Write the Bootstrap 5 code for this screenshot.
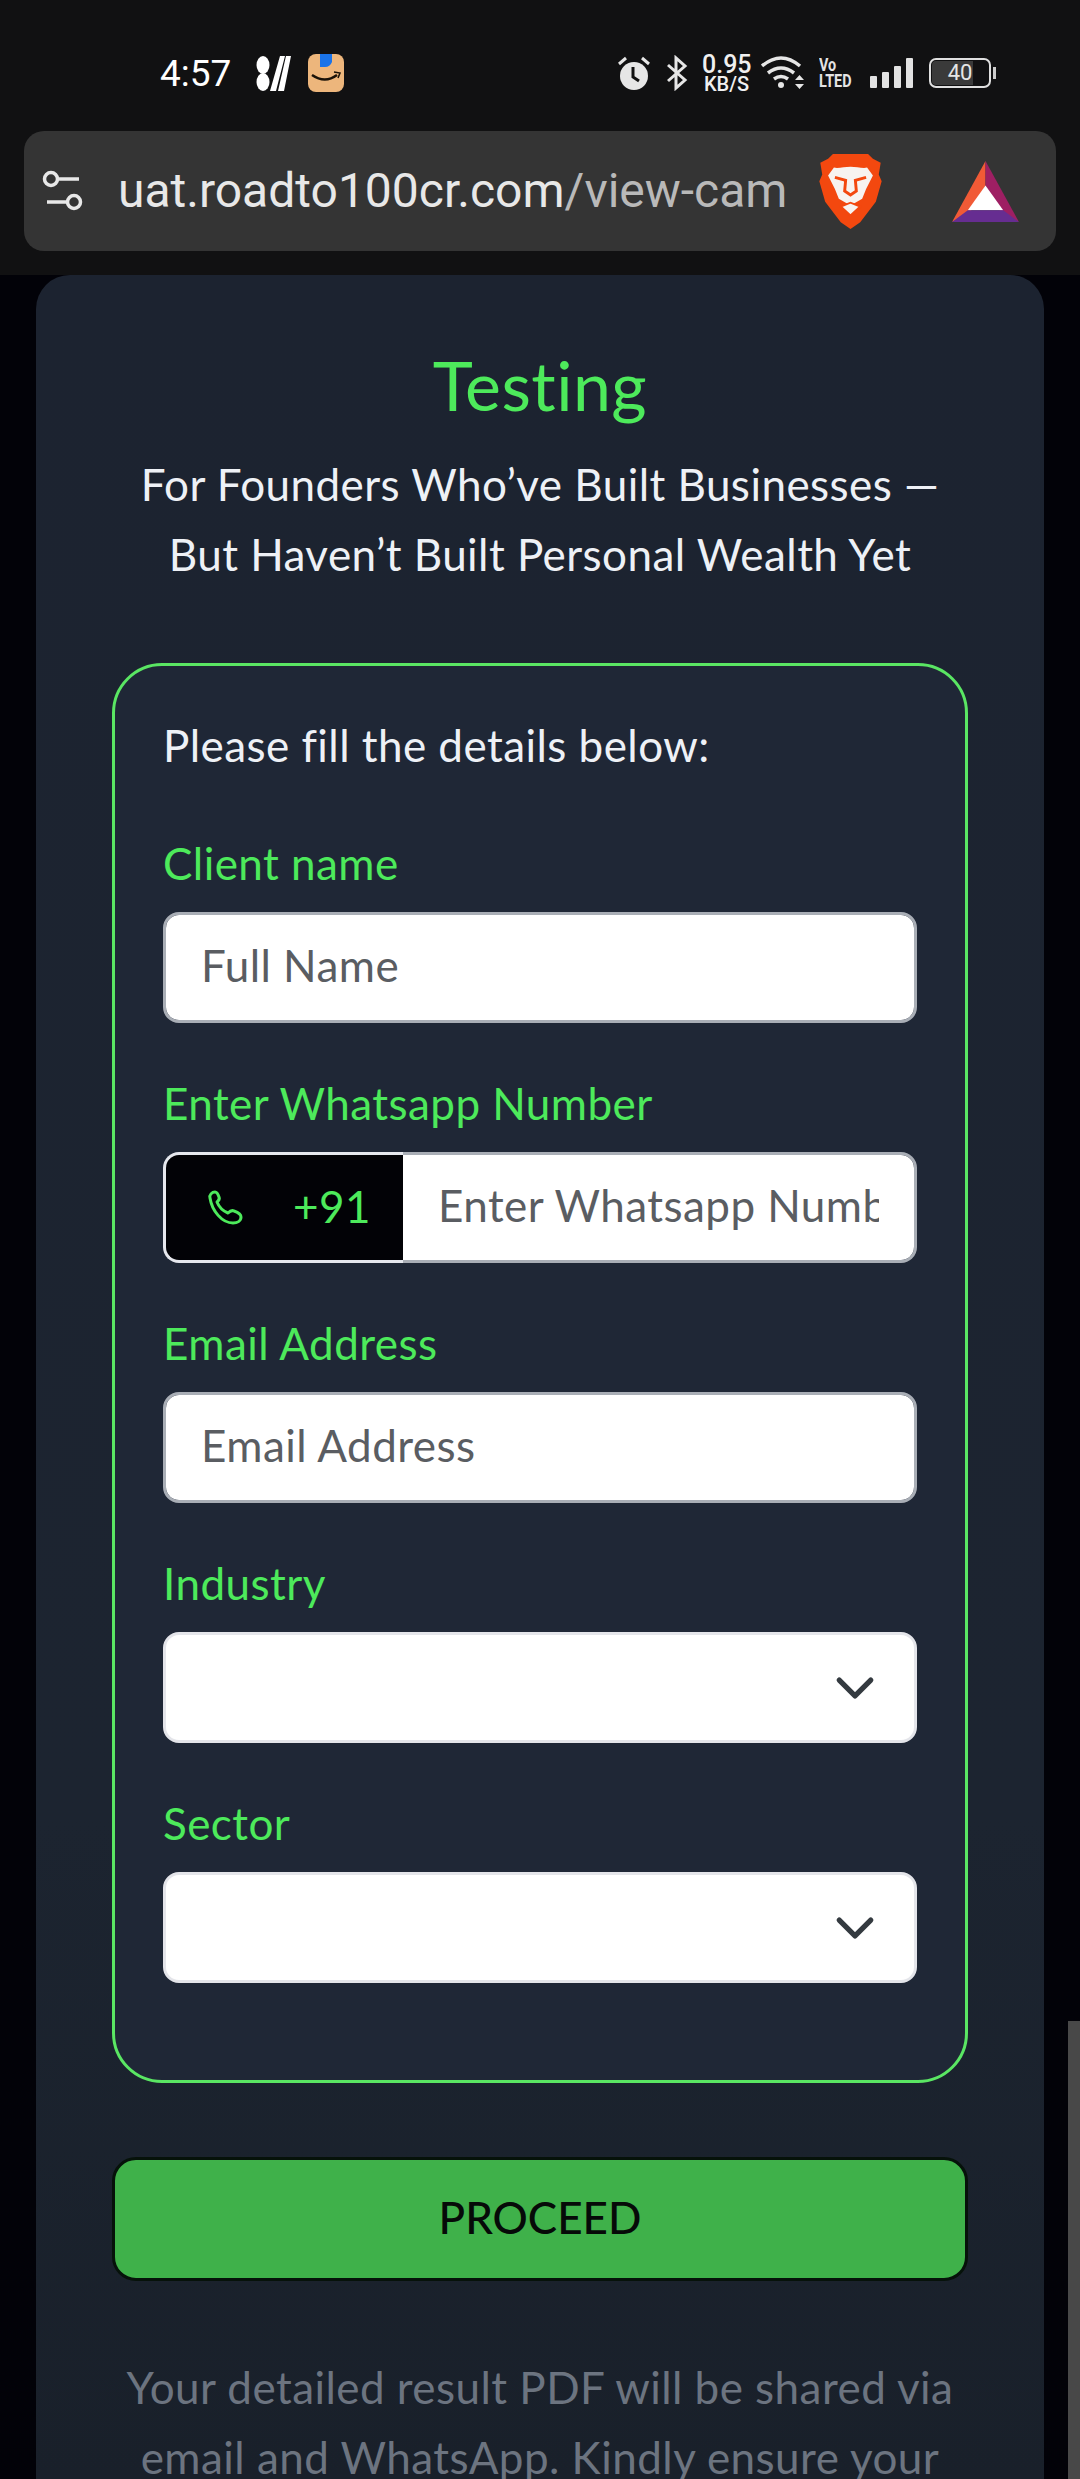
<!DOCTYPE html>
<html lang="en">
<head>
    <meta charset="UTF-8">
    <meta name="viewport" content="width=device-width, initial-scale=1.0">
    <title>Testing</title>
    <link href="https://cdn.jsdelivr.net/npm/bootstrap@5.3.0/dist/css/bootstrap.min.css" rel="stylesheet">
    <style>
        html, body { height: 2479px; overflow: hidden; }
        body { background: #020208; font-family: "Lato", sans-serif; color: #fff; position: relative; letter-spacing: .45px; }
        .phone-top { background: #111112; height: 275px; padding: 0 0 0 24px; font-family: Roboto, sans-serif; letter-spacing: 0; }
        .status-row { height: 131px; padding: 15px 89px 0 136px; }
        .clock-text { font-size: 37px; font-weight: 400; margin-right: 25px; line-height: 1; }
        .speed-text { width: 49px; margin: 0 10px 0 14px; font-size: 25px; line-height: 22px; font-weight: 500; text-align: center; color: #f0f0f0; }
        .speed-text span { display: block; font-size: 20px; line-height: 16px; white-space: nowrap; }
        .lte-text { width: 35px; margin: 0 16px 0 14px; font-size: 18px; line-height: 16px; font-weight: 700; color: #e4e4e4; transform: scaleX(.8); transform-origin: left center; }
        .batt-box { width: 62px; height: 30px; margin-left: 16px; border: 2px solid #e0e0e0; border-radius: 7px; font-size: 22px; line-height: 26px; text-align: center; color: #e6e6e6; position: relative; background: linear-gradient(90deg, #3a3a3a 72%, transparent 72%); background-clip: content-box; padding: 1px; }
        .batt-box span { display: block; margin-top: -1px; }
        .batt-box::after { content: ""; position: absolute; right: -7px; top: 7px; width: 3px; height: 12px; background: #ccc; }
        .url-bar { width: 1032px; height: 120px; background: #343434; border-radius: 20px; padding: 0 0 0 18px; }
        .url-text { font-size: 48px; line-height: 1.2; color: #e8e8e8; width: 670px; margin-left: 32px; white-space: nowrap; letter-spacing: 0; }
        .url-text span { color: #b9b9b9; }
        .page-card { background: linear-gradient(#1c2330, #1c2430 70%, #19202a); width: 1008px; margin-left: 36px; border-radius: 34px 34px 0 0; padding: 72px 76px 0; text-align: center; height: 2204px; }
        .page-title { color: #4dea5b; font-size: 68px; line-height: 76px; font-weight: 400; margin: 0 0 26px; }
        .page-sub { font-size: 44px; line-height: 70px; margin: 0 0 74px; color: #eef1f6; }
        .form-box { background: #1f2736; border: 3px solid #5ae663; border-radius: 50px; padding: 49px 48px 0; height: 1420px; text-align: left; }
        .form-intro { font-size: 44px; line-height: 60px; margin-bottom: 58px; color: #eef1f6; }
        .field-block { margin-bottom: 50px; }
        .field-label { color: #4dea5b; font-size: 44px; line-height: 60px; margin-bottom: 19px; display: block; }
        .field-input { height: 111px; border-radius: 16px; border: 3px solid #a9aeb6; font-size: 44px; padding: 0 35px 5px; color: #333; font-family: inherit; letter-spacing: .45px; }
        .field-input::placeholder { color: #5a5d62; }
        .field-select { height: 111px; border-radius: 16px; border: 3px solid #e4e5ea; background-size: 42px; background-position: right 38px center; }
        .code-addon { width: 241px; background: #020206; border: 3px solid #e6e8ee; border-right: 0; border-radius: 16px 0 0 16px !important; color: #4dea5b; font-size: 44px; padding: 0 0 4px 41px; }
        .code-addon svg { margin-right: 50px; margin-top: 4px; }
        .code-group .field-input { border-left: 0; border-radius: 0 16px 16px 0 !important; }
        .go-btn { display: block; width: 856px; height: 124px; margin-top: 74px; padding-bottom: 10px; background: #3fb14a; border: 3px solid #06120a; border-radius: 24px; color: #060a08; font-size: 44px; font-weight: 500; letter-spacing: 0; }
        .go-btn:hover { background: #3fb14a; color: #060a08; }
        .foot-note { color: #6c7480; font-size: 44px; line-height: 70px; margin: 71px 0 0; }
        .scroll-thumb { position: absolute; right: 0; top: 2021px; width: 12px; height: 458px; background: #484848; }
    </style>
</head>
<body>
    <div class="phone-top">
        <div class="status-row d-flex align-items-center">
            <span class="clock-text">4:57</span>
            <svg width="36" height="36" viewBox="0 0 36 36" class="me-3" fill="#fff"><ellipse cx="7" cy="10" rx="6.500" ry="9"/><ellipse cx="7" cy="27" rx="6.500" ry="9"/><path d="M14 36 24 1h5L20 36zM22 36 30 1h5L28 36z"/></svg>
            <svg width="36" height="38" viewBox="0 0 36 38"><rect y="0" width="36" height="38" rx="8" fill="#edb67c"/><path d="M12 0h12v8q-2 5-7 5h-5z" fill="#1a73e8"/><path d="M4 21q13 9 25 0" fill="none" stroke="#1a1208" stroke-width="2.500"/><path d="M26 18l6 1-2 5" fill="none" stroke="#1a1208" stroke-width="1.500"/></svg>
            <div class="ms-auto d-flex align-items-center">
                <svg width="32" height="34" viewBox="0 0 32 34" fill="#e6e6e6" class="me-3"><circle cx="16" cy="20" r="14"/><path d="M1 8 8 2M31 8 24 2" stroke="#e6e6e6" stroke-width="3"/><path d="M15 11v10l6 4" stroke="#111" stroke-width="3" fill="none"/></svg>
                <svg width="22" height="36" viewBox="0 0 22 36" fill="none" stroke="#e6e6e6" stroke-width="3"><path d="M2 10 19 25 10 33V3l9 8L2 26"/></svg>
                <div class="speed-text">0.95<span>KB/S</span></div>
                <svg width="44" height="34" viewBox="0 0 44 34" fill="none" stroke="#e6e6e6" stroke-width="3.500"><path d="M1 10q19-16 38 0M7 17q13-10 26 0M13 23q7-5 14 0"/><circle cx="20" cy="29" r="3" fill="#e6e6e6" stroke="none"/><path d="M34 24h9l-4.500-5zM34 28h9l-4.500 5z" fill="#e6e6e6" stroke="none"/></svg>
                <div class="lte-text">Vo<br>LTED</div>
                <svg width="43" height="31" viewBox="0 0 43 31" fill="#e2e2e2"><rect y="18" width="7" height="12" rx="1"/><rect x="12" y="14" width="7" height="16" rx="1"/><rect x="24" y="8" width="7" height="22" rx="1"/><rect x="36" y="0" width="7" height="30" rx="1"/></svg>
                <div class="batt-box"><span>40</span></div>
            </div>
        </div>
        <div class="url-bar d-flex align-items-center">
            <svg width="44" height="44" viewBox="0 0 44 44" fill="none" stroke="#e8e8e8" stroke-width="3.500"><circle cx="9" cy="10" r="6.500"/><path d="M16 10h21M5 33h20"/><circle cx="32" cy="33" r="6.500"/></svg>
            <div class="url-text">uat.roadto100cr.com<span>/view-cam</span></div>
            <svg width="65" height="76" viewBox="0 0 64 78" style="margin-left:30px"><path d="M14 1h36l5 5 8 4-2 12 3 7-6 21-16 21-10 7-10-7L6 50 0 29l3-7L1 10l8-4z" fill="#f3480f"/><path d="M32 14c6 0 12 2 17 1l6 8-7 14-4 10-12 7-12-7-4-10-7-14 6-8c5 1 11-1 17-1z" fill="#f7f3f0"/><path d="M16 25l11 3-1 11 6 4 6-4-1-11 11-3" fill="none" stroke="#f3480f" stroke-width="3"/><path d="M22 55l10-4 10 4-10 9z" fill="#f7f3f0" stroke="#f3480f" stroke-width="2"/></svg>
            <svg width="69" height="61" viewBox="0 0 68 62" style="margin-left:68px"><path d="M34 0 0 62l18-9 16-28z" fill="#f15a36"/><path d="M34 0v25l16 28 18 9z" fill="#9e1f63"/><path d="M34 25 16 50h36z" fill="#fff"/><path d="M16 50h36l16 12H0z" fill="#662d91"/></svg>
        </div>
    </div>

    <div class="page-card">
        <h1 class="page-title">Testing</h1>
        <p class="page-sub">For Founders Who’ve Built Businesses —<br>But Haven’t Built Personal Wealth Yet</p>
        <form class="form-box">
            <div class="form-intro">Please fill the details below:</div>
            <div class="field-block">
                <label class="field-label" for="clientName">Client name</label>
                <input id="clientName" type="text" class="form-control field-input" placeholder="Full Name">
            </div>
            <div class="field-block">
                <label class="field-label" for="waNumber">Enter Whatsapp Number</label>
                <div class="input-group code-group">
                    <span class="input-group-text code-addon">
                        <svg width="36" height="36" viewBox="0 0 36 36" fill="none" stroke="#4dea5b" stroke-width="3" stroke-linejoin="round"><path d="M3 8c-1-3 2-6 5-6 2 0 3 2 4 5 1 2 0 3-2 5 2 5 6 9 11 11 2-2 4-3 6-2 3 1 7 3 7 6 0 4-4 6-8 6C15 33 5 21 3 8z"/></svg>
                        +91
                    </span>
                    <input id="waNumber" type="tel" class="form-control field-input" placeholder="Enter Whatsapp Number">
                </div>
            </div>
            <div class="field-block">
                <label class="field-label" for="emailAddr">Email Address</label>
                <input id="emailAddr" type="email" class="form-control field-input" placeholder="Email Address">
            </div>
            <div class="field-block">
                <label class="field-label" for="industry">Industry</label>
                <select id="industry" class="form-select field-select"><option></option></select>
            </div>
            <div class="field-block">
                <label class="field-label" for="sector">Sector</label>
                <select id="sector" class="form-select field-select"><option></option></select>
            </div>
        </form>
        <button type="button" class="btn go-btn">PROCEED</button>
        <p class="foot-note">Your detailed result PDF will be shared via<br>email and WhatsApp. Kindly ensure your</p>
    </div>
    <div class="scroll-thumb"></div>

    <script src="https://cdn.jsdelivr.net/npm/bootstrap@5.3.0/dist/js/bootstrap.bundle.min.js"></script>
</body>
</html>
